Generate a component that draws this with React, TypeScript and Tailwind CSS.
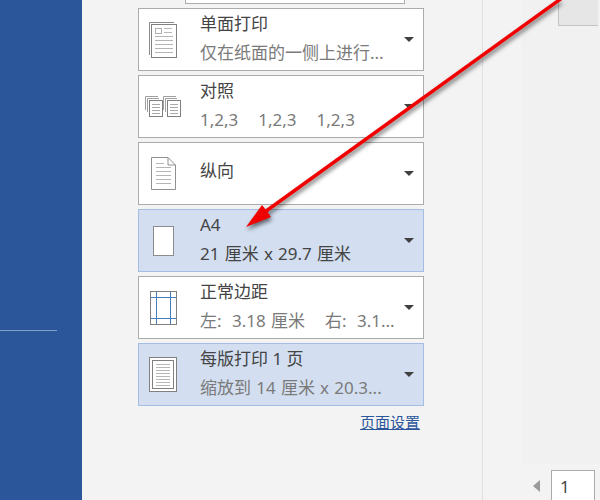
import React from 'react';

const font = { fontFamily: '"Noto Sans", "Noto Sans CJK SC", sans-serif' };

const SinglePageIcon = () => (
  <svg width="28" height="36" viewBox="0 0 28 36" fill="none">
    <path d="M.5 33V.5H25" stroke="#8a8a8a" />
    <rect x="2.5" y="2.5" width="25" height="33" fill="#fff" stroke="#808080" />
    <rect x="6.5" y="6.5" width="6" height="5" stroke="#b0b0b0" />
    <path d="M15 6.5h8M15 10.5h8M6 14.5h18M6 18.5h18M6 22.5h18M6 26.5h18M6 30.5h18" stroke="#b5b5b5" />
  </svg>
);

const CollateIcon = () => (
  <svg width="36" height="21" viewBox="0 0 36 21" fill="none">
    {[0, 18].map((x) => (
      <g key={x} transform={`translate(${x} 0)`}>
        <path d="M.5 14V.5H13M2.5 16V2.5H14" stroke="#a0a0a0" />
        <rect x="4.5" y="4.5" width="13" height="16" fill="#fff" stroke="#808080" />
        <path d="M7 8.5h8M7 11.5h8M7 14.5h8M7 17.5h8" stroke="#a8a8a8" />
      </g>
    ))}
  </svg>
);

const PortraitIcon = () => (
  <svg width="25" height="33" viewBox="0 0 25 33" fill="none">
    <path d="M.5.5H17L24.5 8V32.5H.5Z" fill="#fff" stroke="#909090" />
    <path d="M17 .5V8H24.5" stroke="#909090" />
    <path d="M5 6.5h8M5 10.5h15M5 14.5h15M5 18.5h15M5 22.5h15M5 26.5h15" stroke="#b5b5b5" />
  </svg>
);

const A4Icon = () => <div className="w-[21px] h-[30px] bg-white border border-[#8c8c8c]" />;

const MarginsIcon = () => (
  <svg width="27" height="34" viewBox="0 0 27 34" fill="none">
    <rect x=".5" y=".5" width="26" height="33" fill="#fff" stroke="#808080" />
    <path d="M6.5 1v32M20.5 1v32M1 6.5h25M1 27.5h25" stroke="#4a7ebb" />
  </svg>
);

const PerSheetIcon = () => (
  <svg width="28" height="35" viewBox="0 0 28 35" fill="none">
    <rect x=".5" y=".5" width="27" height="34" fill="#fff" stroke="#808080" />
    <rect x="3.5" y="3.5" width="21" height="28" stroke="#808080" />
    <path d="M7 7.5h14M7 10.5h14M7 13.5h14M7 16.5h14M7 19.5h14M7 22.5h14M7 25.5h14M7 28.5h14" stroke="#b8b8b8" />
  </svg>
);

const rows = [
  { icon: <SinglePageIcon />, title: '单面打印', sub: '仅在纸面的一侧上进行...' },
  {
    icon: <CollateIcon />,
    title: '对照',
    sub: (
      <span className="flex gap-[20px]">
        <span>1,2,3</span>
        <span>1,2,3</span>
        <span>1,2,3</span>
      </span>
    ),
  },
  { icon: <PortraitIcon />, title: '纵向' },
  { icon: <A4Icon />, title: 'A4', sub: '21 厘米 x 29.7 厘米', active: true, darkSub: true },
  {
    icon: <MarginsIcon />,
    title: '正常边距',
    sub: (
      <span className="flex gap-[20px]">
        <span>左:&nbsp; 3.18 厘米</span>
        <span>右:&nbsp; 3.1...</span>
      </span>
    ),
  },
  { icon: <PerSheetIcon />, title: '每版打印 1 页', sub: '缩放到 14 厘米 x 20.3...', active: true },
];

const App = () => {
  return (
    <div className="relative flex w-[600px] h-[500px] overflow-hidden bg-[#f3f3f3]" style={font}>
      <div className="w-[82px] shrink-0 bg-[#2b579a] pt-[330px]">
        <div className="w-[57px] h-px bg-[#7fa3c9]" />
      </div>

      <div className="w-[401px] shrink-0 pl-[56px] border-r border-[#e0e0e0]">
        <div className="ml-[47px] w-[220px] h-[4px] bg-white border-x border-b border-[#ababab]" />
        <div className="mt-[4px] w-[286px] flex flex-col gap-[4px]">
          {rows.map((row, i) => (
            <div
              key={i}
              className={`relative flex items-center h-[63px] border ${
                row.active ? 'bg-[#d3dff0] border-[#a3bde3]' : 'bg-white border-[#ababab]'
              }`}
            >
              <div className="w-[48px] mr-[13px] shrink-0 flex justify-center">{row.icon}</div>
              <div
                className={`flex-1 flex flex-col gap-[7px] text-[17px] leading-[22px] whitespace-nowrap ${
                  row.sub ? 'pb-[2px]' : 'pb-[6px]'
                }`}
              >
                <div className="text-[#444444]">{row.title}</div>
                {row.sub && (
                  <div className={`[word-spacing:0.8px] ${row.darkSub ? 'text-[#444444]' : 'text-[#7a7a7a]'}`}>
                    {row.sub}
                  </div>
                )}
              </div>
              <div className="mr-[9px] w-0 h-0 border-x-[5px] border-x-transparent border-t-[5px] border-t-[#404040]" />
            </div>
          ))}
        </div>
        <div className="w-[282px] mt-[6px] text-right text-[15px] leading-[20px] text-[#2b579a] underline">
          页面设置
        </div>
      </div>

      <div className="flex-1 flex flex-col">
        <div className="flex-1 ml-[39px] bg-[#f1f1f1] flex justify-end items-start">
          <div className="w-[40px] h-[26px] mr-[2px] bg-[#e6e6e6] border-l border-b border-[#c4c4c4]" />
        </div>
        <div className="h-[37px] flex items-start pl-[50px]">
          <div className="mt-[17px] mr-[11px] w-0 h-0 border-y-[6px] border-y-transparent border-r-[7px] border-r-[#9a9a9a]" />
          <div className="mt-[7px] w-[44px] h-[40px] bg-white border border-[#ababab] pl-[8px] pt-[5px] text-[17px] leading-[22px] text-[#444444]">
            1
          </div>
        </div>
      </div>

      <svg
        className="absolute inset-0 pointer-events-none [filter:drop-shadow(1px_3px_2px_rgba(0,0,0,.55))]"
        width="600"
        height="500"
        viewBox="0 0 600 500"
        fill="none"
      >
        <path d="M562 -2 L262 214" stroke="#f00000" strokeWidth="3.5" />
        <path d="M246 227 L262 205 L266 210 L271 217 Z" fill="#f00000" />
      </svg>
    </div>
  );
};

export default App;
